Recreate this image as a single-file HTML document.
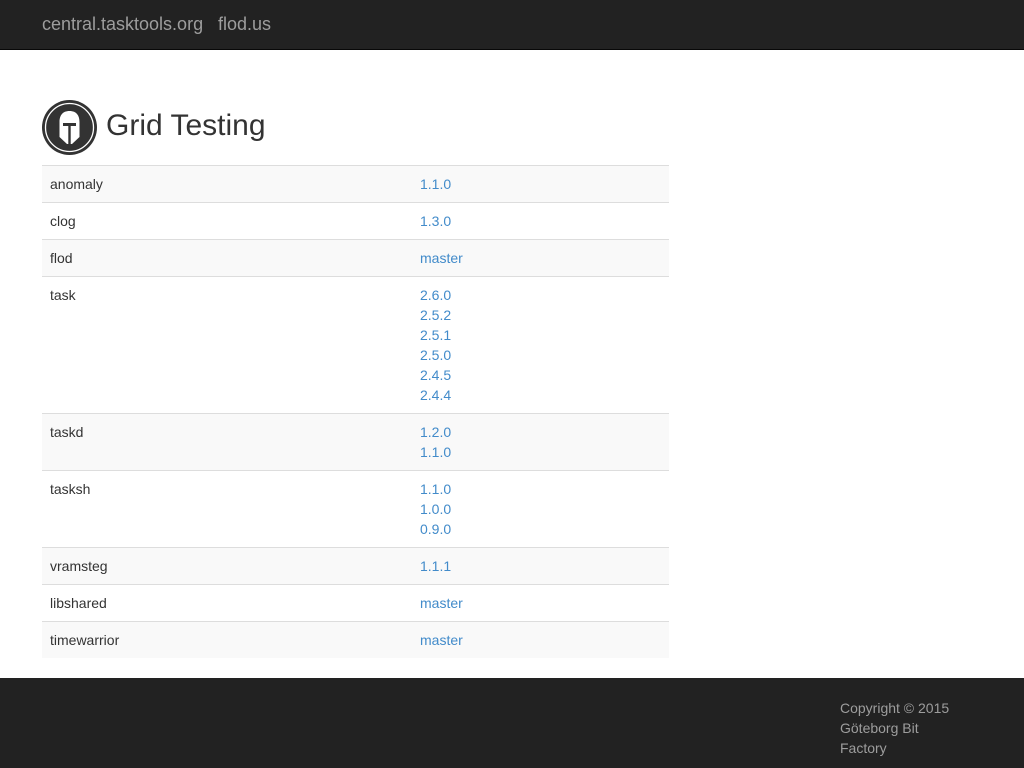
<!DOCTYPE html>
<html><head><meta charset="utf-8"><style>
body{margin:0;font-family:"Liberation Sans",sans-serif;font-size:14px;color:#333;background:#fff;width:1024px;height:768px;overflow:hidden;position:relative}
.nav{height:50px;background:#222;border-bottom:1px solid #080808;box-sizing:border-box}
.nav a{position:absolute;top:14px;font-size:18px;color:#9d9d9d;text-decoration:none;line-height:20px}
h1{position:absolute;left:106px;top:108px;margin:0;font-size:30px;font-weight:normal;line-height:36px;color:#333}
.logo{position:absolute;left:42px;top:100px}
table{position:absolute;left:42px;top:165px;width:627px;border-collapse:collapse}
td{border-top:1px solid #ddd;padding:8px;line-height:20px;vertical-align:top}
td:first-child{width:354px}
tr:nth-child(odd) td{background:#f9f9f9}
a.v{color:#428bca;text-decoration:none}
.foot{position:absolute;left:0;top:678px;width:1024px;height:90px;background:#222}
.foot div{position:absolute;left:840px;top:20px;color:#9d9d9d;line-height:20px;width:120px}
</style></head><body>
<div class="nav"><a style="left:42px">central.tasktools.org</a><a style="left:218px">flod.us</a></div>
<svg class="logo" width="55" height="55" viewBox="0 0 55 55">
<circle cx="27.5" cy="27.5" r="27.5" fill="#333"/>
<circle cx="27.5" cy="27.5" r="24" fill="none" stroke="#fff" stroke-width="1.3"/>
<path d="M27.5 11C20.5 11 17.5 15.5 17.5 22L17.5 37L25 44L26.3 44L26.3 26L21 26L21 23L34 23L34 26L28.7 26L28.7 44L30 44L37.5 37L37.5 22C37.5 15.5 34.5 11 27.5 11Z" fill="#fff"/>
</svg>
<h1>Grid Testing</h1>
<table>
<tr><td>anomaly</td><td><a class="v">1.1.0</a></td></tr>
<tr><td>clog</td><td><a class="v">1.3.0</a></td></tr>
<tr><td>flod</td><td><a class="v">master</a></td></tr>
<tr><td>task</td><td><a class="v">2.6.0<br>2.5.2<br>2.5.1<br>2.5.0<br>2.4.5<br>2.4.4</a></td></tr>
<tr><td>taskd</td><td><a class="v">1.2.0<br>1.1.0</a></td></tr>
<tr><td>tasksh</td><td><a class="v">1.1.0<br>1.0.0<br>0.9.0</a></td></tr>
<tr><td>vramsteg</td><td><a class="v">1.1.1</a></td></tr>
<tr><td>libshared</td><td><a class="v">master</a></td></tr>
<tr><td>timewarrior</td><td><a class="v">master</a></td></tr>
</table>
<div class="foot"><div>Copyright © 2015 Göteborg Bit Factory</div></div>
</body></html>
